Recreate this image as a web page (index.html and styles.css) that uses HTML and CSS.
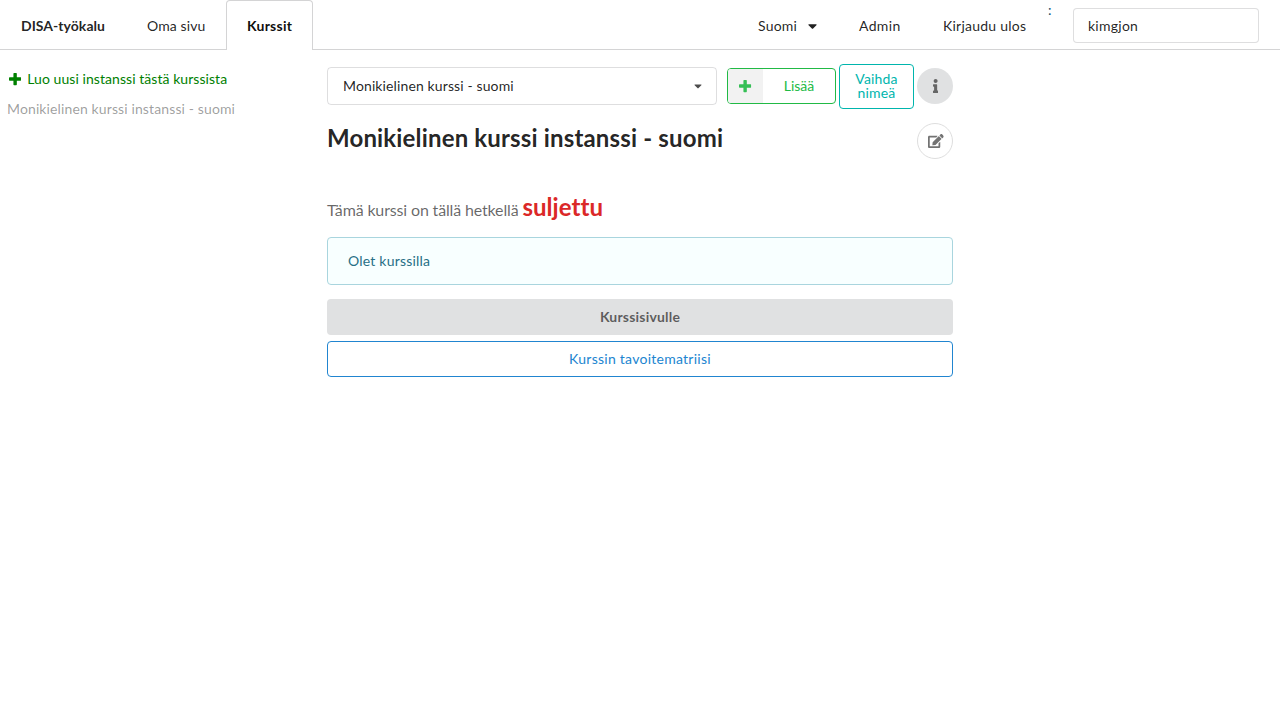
FILE: index.html
```html
<!DOCTYPE html>
<html lang="fi">
<head>
<meta charset="utf-8">
<title>DISA-työkalu</title>
<link rel="stylesheet" href="styles.css">
</head>
<body>
<svg class="sprite" aria-hidden="true">
  <symbol id="plus" viewBox="0 0 448 512"><path d="M448 294.2v-76.4c0-13.3-10.7-24-24-24H286.2V56c0-13.3-10.7-24-24-24h-76.4c-13.3 0-24 10.7-24 24v137.8H24c-13.3 0-24 10.7-24 24v76.4c0 13.3 10.7 24 24 24h137.8V456c0 13.3 10.7 24 24 24h76.4c13.3 0 24-10.7 24-24V318.2H424c13.3 0 24-10.7 24-24z"/></symbol>
  <symbol id="caret" viewBox="0 0 320 512"><path d="M31.3 192h257.3c17.8 0 26.7 21.5 14.1 34.1L174.1 354.8c-7.8 7.8-20.5 7.8-28.3 0L17.2 226.1C4.6 213.5 13.4 192 31.3 192z"/></symbol>
  <symbol id="info" viewBox="0 0 192 512"><path d="M20 424.229h20V279.771H20c-11.046 0-20-8.954-20-20V212c0-11.046 8.954-20 20-20h112c11.046 0 20 8.954 20 20v212.229h20c11.046 0 20 8.954 20 20V492c0 11.046-8.954 20-20 20H20c-11.046 0-20-8.954-20-20v-47.771c0-11.046 8.954-20 20-20zM96 0C56.235 0 24 32.235 24 72s32.235 72 72 72 72-32.235 72-72S135.764 0 96 0z"/></symbol>
  <symbol id="edit" viewBox="0 0 576 512"><path d="M402.6 83.2l90.2 90.2c3.8 3.8 3.8 10 0 13.8L274.4 405.6l-92.8 10.3c-12.4 1.4-22.9-9.1-21.5-21.5l10.3-92.8L388.8 83.2c3.8-3.8 10-3.8 13.8 0zm162-22.9l-48.8-48.8c-15.2-15.2-39.9-15.2-55.2 0l-35.4 35.4c-3.8 3.8-3.8 10 0 13.8l90.2 90.2c3.8 3.8 10 3.8 13.8 0l35.4-35.4c15.2-15.3 15.2-40 0-55.2zM384 346.2V448H64V128h229.8c3.2 0 6.2-1.3 8.5-3.5l40-40c7.6-7.6 2.2-20.5-8.5-20.5H48C21.5 64 0 85.5 0 112v352c0 26.5 21.5 48 48 48h352c26.5 0 48-21.5 48-48V306.2c0-10.7-12.9-16-20.5-8.5l-40 40c-2.2 2.3-3.5 5.3-3.5 8.5z"/></symbol>
</svg>
<nav class="menu">
  <a class="item brand">DISA-työkalu</a>
  <a class="item own">Oma sivu</a>
  <a class="item active">Kurssit</a>
  <div class="right">
    <a class="item language">Suomi<svg class="icon caret-menu"><use href="#caret"/></svg></a>
    <a class="item admin">Admin</a>
    <a class="item logout">Kirjaudu ulos</a>
    <div class="item user"><span class="colon">:</span><input class="input" type="text" value="kimgjon"></div>
  </div>
</nav>
<div class="layout">
  <aside class="side">
    <a class="create"><svg class="icon plus"><use href="#plus"/></svg>Luo uusi instanssi tästä kurssista</a>
    <a class="instance">Monikielinen kurssi instanssi - suomi</a>
  </aside>
  <main class="main">
    <div class="toolbar">
      <div class="select">Monikielinen kurssi - suomi<svg class="icon caret-select"><use href="#caret"/></svg></div>
      <button class="button add"><span class="add-icon"><svg class="icon plus"><use href="#plus"/></svg></span><span class="add-label">Lisää</span></button>
      <button class="button rename">Vaihda nimeä</button>
      <button class="button round info"><svg class="icon info-icon"><use href="#info"/></svg></button>
    </div>
    <div class="heading">
      <h2 class="title">Monikielinen kurssi instanssi - suomi</h2>
      <button class="button round edit"><svg class="icon edit-icon"><use href="#edit"/></svg></button>
    </div>
    <p class="status">Tämä kurssi on tällä hetkellä <span class="closed">suljettu</span></p>
    <div class="message">Olet kurssilla</div>
    <button class="button wide grey">Kurssisivulle</button>
    <button class="button wide blue">Kurssin tavoitematriisi</button>
  </main>
</div>
</body>
</html>
```
FILE: styles.css
```css
* { box-sizing: border-box; }
body {
  margin: 0;
  background: #fff;
  color: rgba(0, 0, 0, .87);
  font: 14px/20px Lato, sans-serif;
  font-variant-ligatures: none;
}
.sprite { display: none; }
.icon { display: block; flex: none; height: 14px; fill: currentColor; }
.plus { width: 12.25px; }
.menu {
  display: flex;
  height: 50px;
  border-bottom: 1px solid #d4d4d5;
}
.item {
  display: flex;
  align-items: center;
  height: 50px;
  padding: 2px 0 0 21px;
  white-space: nowrap;
}
.brand { width: 126px; font-weight: 700; letter-spacing: .03px; }
.own { width: 100px; letter-spacing: .1px; }
.active {
  width: 87px;
  padding: 1px 0 0 20px;
  border: 1px solid #d4d4d5;
  border-bottom: 0;
  border-radius: 4px 4px 0 0;
  background: #fff;
  color: rgba(0, 0, 0, .95);
  font-weight: 700;
  letter-spacing: .25px;
}
.right { display: flex; margin-left: auto; }
.language { width: 101px; letter-spacing: .2px; }
.admin { width: 84px; letter-spacing: .35px; }
.logout { width: 126px; letter-spacing: .24px; }
.caret-menu { width: 9px; margin-left: 11px; }
.user { align-items: flex-start; width: 232px; padding: 0; }
.colon { width: 25px; color: #14506e; }
.input {
  width: 186px;
  height: 35px;
  margin-top: 8px;
  padding: 0 14px 1px;
  border: 1px solid rgba(34, 36, 38, .15);
  border-radius: 4px;
  color: rgba(0, 0, 0, .87);
  font: 14px Lato, sans-serif;
  letter-spacing: .25px;
  outline: none;
}
.layout { display: grid; grid-template-columns: 327px 626px; }
.side { padding: 19px 7px 0; }
.create { display: flex; align-items: center; padding-left: 2px; color: green; letter-spacing: .06px; }
.create .icon { margin-right: 6px; }
.instance { display: block; margin-top: 10px; color: rgba(40, 40, 40, .45); letter-spacing: .12px; }
.main { padding-top: 14px; }
.toolbar { display: flex; align-items: flex-start; height: 45px; }
.select {
  display: flex;
  align-items: center;
  justify-content: space-between;
  width: 390px;
  height: 38px;
  margin: 3px 10px 0 0;
  padding: 0 14px 0 15px;
  border: 1px solid rgba(34, 36, 38, .15);
  border-radius: 4px;
  letter-spacing: .12px;
}
.caret-select { width: 8px; height: 12px; opacity: .8; }
.button {
  display: flex;
  align-items: center;
  justify-content: center;
  margin: 0;
  padding: 0;
  border: 1px solid;
  border-radius: 4px;
  background: #fff;
  font: 14px/14px Lato, sans-serif;
}
.add { width: 109px; height: 36px; margin: 4px 3px 0 0; border-color: #21ba45; color: #21ba45; overflow: hidden; }
.add-icon { display: flex; align-items: center; justify-content: center; width: 35px; height: 34px; background: #f2f2f2; }
.add-icon .icon { opacity: .9; }
.add-label { flex: 1; }
.rename { width: 75px; height: 45px; margin-right: 3px; padding: 0 12px 2px; border-color: #00b5ad; color: #00b5ad; letter-spacing: .15px; }
.round { flex: none; width: 36px; height: 36px; border-radius: 50%; color: #666; }
.info { margin-top: 4px; padding-left: 1px; border: 0; background: #e0e1e2; }
.info-icon { width: 5.25px; }
.edit { padding-left: 2px; border-color: #dedede; color: #737373; }
.edit-icon { width: 15.75px; }
.heading { display: flex; justify-content: space-between; height: 50px; padding-top: 14px; }
.title { margin: -1px 0 0; font-size: 24px; line-height: 31px; font-weight: 700; letter-spacing: .16px; }
.status { margin: 33px 0 12px; font-size: 16px; line-height: 30px; color: rgba(0, 0, 0, .6); letter-spacing: -.15px; }
.closed { color: #db2828; font-size: 24px; font-weight: 700; letter-spacing: .05px; }
.message {
  height: 48px;
  margin-bottom: 14px;
  padding: 13px 20px;
  border: 1px solid #a9d5de;
  border-radius: 4px;
  background: #f8ffff;
  color: #276f86;
  letter-spacing: .2px;
}
.wide { width: 626px; height: 36px; }
.grey { margin-bottom: 6px; border: 0; background: #e0e1e2; color: rgba(0, 0, 0, .6); font-weight: 700; letter-spacing: .2px; }
.blue { border-color: #2185d0; color: #2185d0; letter-spacing: .26px; }
```
